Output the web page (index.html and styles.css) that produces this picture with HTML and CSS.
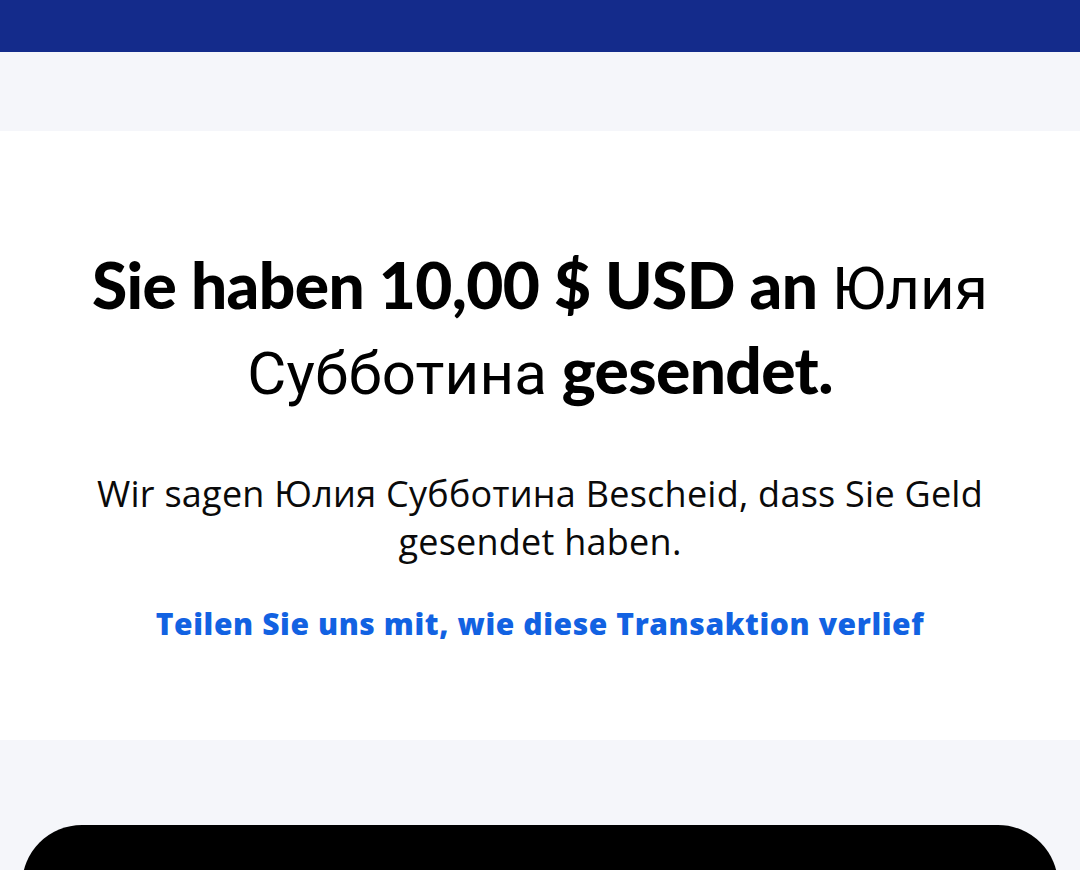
FILE: index.html
```html
<!DOCTYPE html>
<html lang="de">
<head>
<meta charset="utf-8">
<title>Gesendet</title>
<link rel="stylesheet" href="styles.css">
</head>
<body>
<header class="topbar"></header>
<div class="gap"></div>
<main class="card">
  <h1 class="headline"><b>Sie haben 10,00 $ USD an</b> <span class="name">Юлия</span> <span class="name">Субботина</span> <b>gesendet.</b></h1>
  <p class="note">Wir sagen Юлия Субботина Bescheid, dass Sie Geld gesendet haben.</p>
  <a class="feedback" href="#">Teilen Sie uns mit, wie diese Transaktion verlief</a>
</main>
<footer class="footer">
  <div class="button"></div>
</footer>
</body>
</html>
```

FILE: styles.css
```css
html, body {
  margin: 0;
  padding: 0;
  background: #f5f6fa;
  height: 870px;
  overflow: hidden;
}

.topbar {
  height: 52px;
  background: #142b8b;
}

.gap {
  height: 79px;
}

.card {
  height: 609px;
  box-sizing: border-box;
  background: #ffffff;
  padding: 113px 80px 0;
  display: flex;
  flex-direction: column;
  align-items: center;
  text-align: center;
}

.headline {
  margin: 0;
  font-family: "Lato", "Roboto", sans-serif;
  font-size: 64px;
  line-height: 81px;
  font-weight: 900;
  color: #000;
  letter-spacing: -0.6px;
}

.headline b {
  font-weight: 900;
}

.headline .name {
  font-family: "Roboto", sans-serif;
  font-size: 60px;
  font-weight: 400;
  letter-spacing: 0.2px;
}

.note {
  margin: 56px 0 0;
  max-width: 900px;
  font-family: "Open Sans", "Roboto", sans-serif;
  font-size: 36px;
  line-height: 48px;
  color: #0a0a0a;
  letter-spacing: 0.25px;
}

.feedback {
  margin-top: 38px;
  font-family: "Open Sans", sans-serif;
  font-weight: 800;
  font-size: 30px;
  line-height: 40px;
  color: #1262e2;
  text-decoration: none;
  letter-spacing: 0.6px;
}

.footer {
  height: 130px;
  box-sizing: border-box;
  padding: 85px 22px 0;
}

.button {
  height: 60px;
  background: #000;
  border-radius: 62px 62px 0 0;
}
```
